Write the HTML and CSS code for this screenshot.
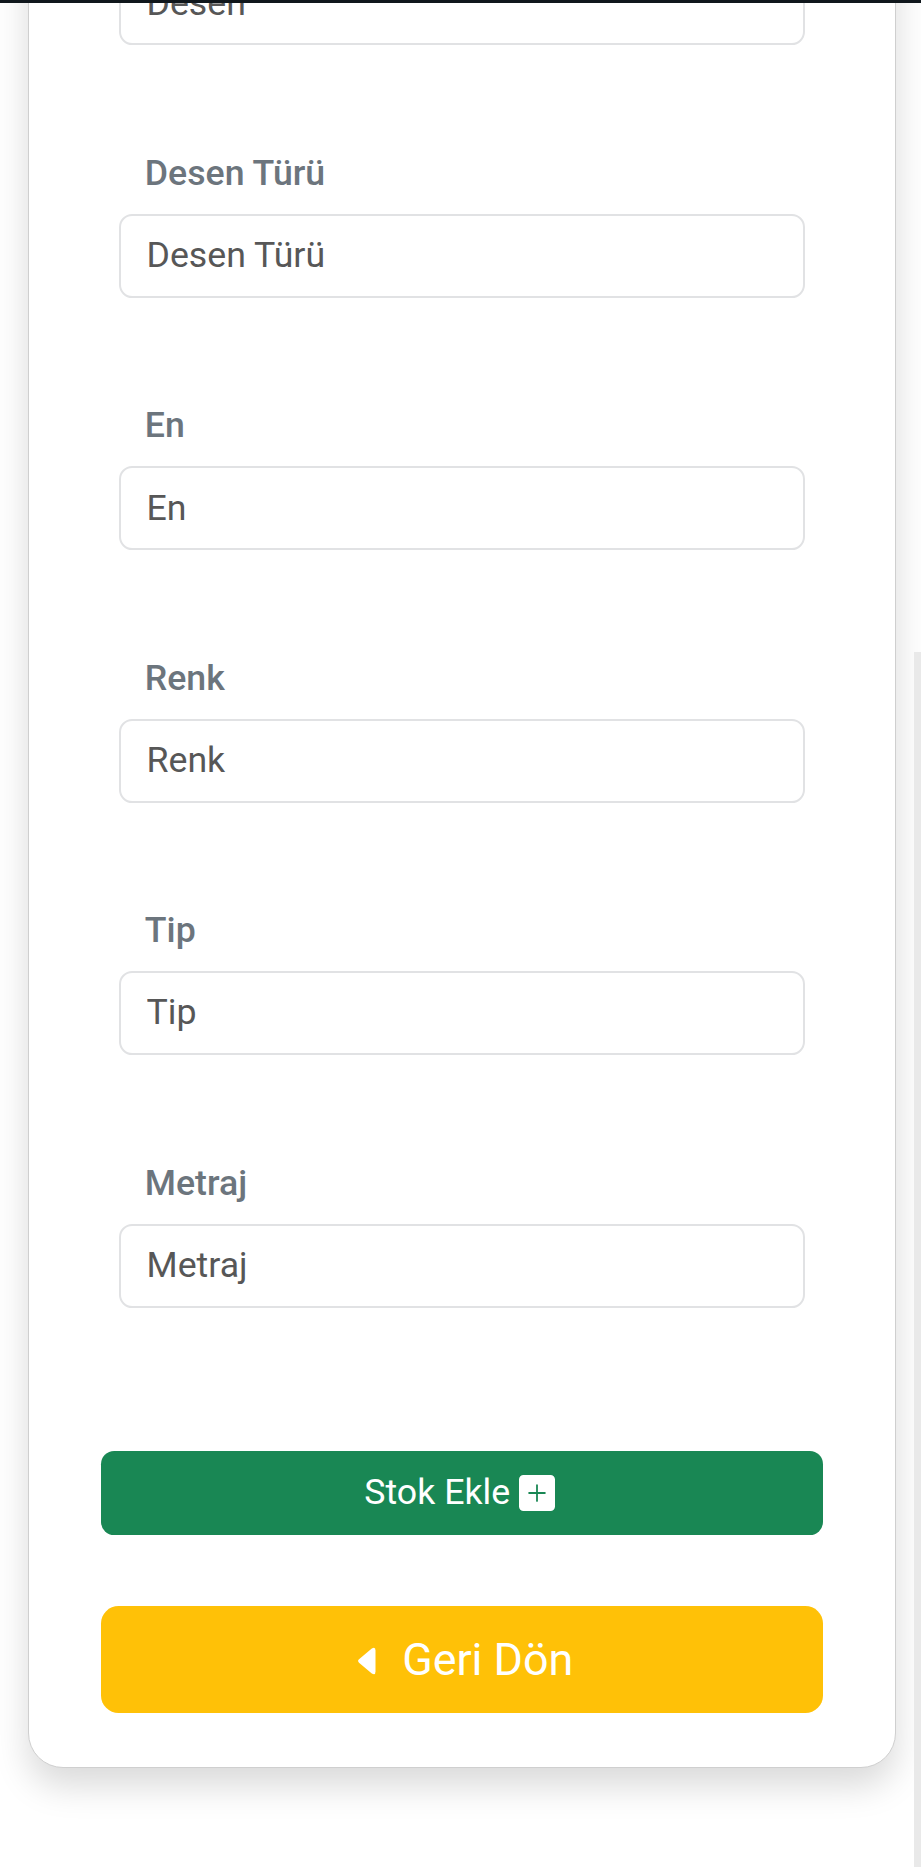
FILE: index.html
```html
<!DOCTYPE html>
<html lang="tr">
<head>
<meta charset="utf-8">
<title>Stok Ekle</title>
<link rel="stylesheet" href="styles.css">
</head>
<body>
<div class="topbar"></div>
<main class="page">
  <form class="card">
    <div class="fields">
      <div class="field"><input class="input" type="text" placeholder="Desen"></div>
      <div class="field"><label class="label" for="tur">Desen Türü</label><input class="input" id="tur" type="text" placeholder="Desen Türü"></div>
      <div class="field"><label class="label" for="en">En</label><input class="input" id="en" type="text" placeholder="En"></div>
      <div class="field"><label class="label" for="renk">Renk</label><input class="input" id="renk" type="text" placeholder="Renk"></div>
      <div class="field"><label class="label" for="tip">Tip</label><input class="input" id="tip" type="text" placeholder="Tip"></div>
      <div class="field"><label class="label" for="metraj">Metraj</label><input class="input" id="metraj" type="text" placeholder="Metraj"></div>
    </div>
    <button class="btn btn-success" type="button"><span>Stok Ekle</span><svg class="icon-plus" viewBox="0 0 16 16" fill="currentColor"><path d="M2 0a2 2 0 0 0-2 2v12a2 2 0 0 0 2 2h12a2 2 0 0 0 2-2V2a2 2 0 0 0-2-2zm6.400 4.500v3.100h3.100a.4.4 0 0 1 0 .8h-3.100v3.100a.4.4 0 0 1-.8 0v-3.100h-3.100a.4.4 0 0 1 0-.8h3.100v-3.100a.4.4 0 0 1 .8 0"/></svg></button>
    <button class="btn btn-warning" type="button"><svg class="icon-caret" viewBox="0 0 18 28" fill="currentColor"><path d="M1 12.300 13.800 1.500Q17.500-.8 17.500 3.500V24.500Q17.500 28.800 13.800 26.500L1 15.700Q-.8 14 1 12.300Z"/></svg><span>Geri Dön</span></button>
  </form>
</main>
<div class="scroll-thumb"></div>
</body>
</html>
```
FILE: styles.css
```css
* { box-sizing: border-box; }
body {
  margin: 0;
  height: 1867px;
  overflow: hidden;
  background: #fff;
  font-family: Roboto, "Liberation Sans", sans-serif;
  font-size: 35.700px;
  line-height: 1.5;
}
.topbar {
  position: fixed;
  top: 0;
  left: 0;
  right: 0;
  height: 3px;
  background: #10171c;
  z-index: 2;
}
.page { padding: 0 25px 0 28px; }
.card {
  display: flex;
  flex-direction: column;
  margin-top: -60px;
  height: 1828px;
  padding: 20.500px 72px 0 71.500px;
  border: 1px solid #cfcfcf;
  border-radius: 0 0 35px 35px;
  background: #fff;
  box-shadow: 0 17.600px 35.200px rgba(0, 0, 0, .15);
}
.fields {
  display: flex;
  flex-direction: column;
  gap: 101.500px;
  padding: 0 18px;
}
.field { display: flex; flex-direction: column; }
.label {
  height: 52.800px;
  margin: 0 0 14.600px 26.300px;
  color: #6c757d;
  font-weight: 500;
}
.input {
  width: 100%;
  height: 83.600px;
  padding: 0 26px 1.500px;
  border: 2px solid #e1e2e4;
  border-radius: 13.200px;
  background: #fff;
  font: inherit;
  outline: none;
}
.input::placeholder { color: #575757; opacity: 1; }
.btn {
  display: flex;
  align-items: center;
  justify-content: center;
  border: 0;
  padding: 0;
  color: #fff;
  font: inherit;
}
.btn-success {
  height: 83.500px;
  margin-top: 143.500px;
  gap: 9px;
  padding-right: 4px;
  padding-top: 1px;
  border-radius: 13.200px;
  background: #198754;
}
.icon-plus { width: 36px; height: 36px; }
.btn-warning {
  height: 107px;
  margin-top: 71.500px;
  gap: 26px;
  padding-left: 8px;
  border-radius: 17.600px;
  background: #ffc107;
  font-size: 44.800px;
}
.icon-caret { width: 18px; height: 28px; margin-top: 2px; }
.scroll-thumb {
  position: fixed;
  top: 652px;
  right: 0;
  bottom: 0;
  width: 7px;
  background: #e9e9e9;
}
```
